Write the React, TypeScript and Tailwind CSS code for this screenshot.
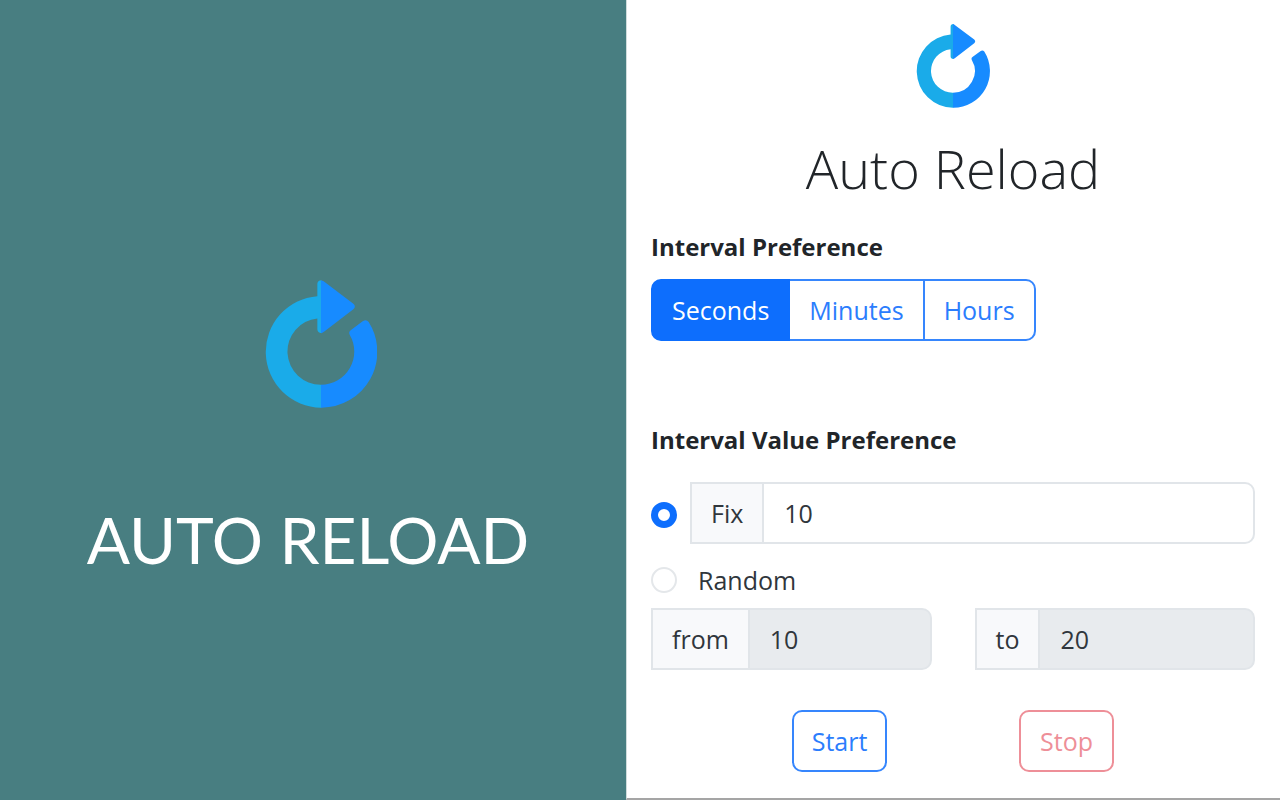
import { useState } from "react";

function ReloadLogo({ className }: { className: string }) {
  return (
    <svg viewBox="44 28 336 384" className={className} aria-hidden="true">
      <path
        fill="#1aabe9"
        d="M213 28.500C206 28.500 201 33 201 40V76.500A167.500 167.500 0 0 0 212 411H213V342H212A99.500 99.500 0 0 1 201 143.500V176C201 183 206 187.500 213 187.500Z"
      />
      <path
        fill="#178bff"
        d="M212 28.500Q216 29 220 32L309 99Q318 107 309 116L220 184Q216 187.500 212 187.500Z"
      />
      <path
        fill="#178bff"
        d="M212 342A99.500 99.500 0 0 0 298 192Q294 184 301 179L337 152Q348 145 355 154A167.500 167.500 0 0 1 212 411Z"
      />
    </svg>
  );
}

const units = ["Seconds", "Minutes", "Hours"];

const radioClass =
  "size-[26px] shrink-0 appearance-none rounded-full border-2 border-[#e4e7ea] bg-white checked:border-[7px] checked:border-[#0d6efd]";
const addonClass =
  "flex items-center border-2 border-r-0 border-[#e1e5e9] bg-[#f8f9fb] px-[19px]";
const fieldClass =
  "w-0 min-w-0 flex-1 rounded-r-[10px] border-2 border-[#e1e5e9] bg-white px-5 disabled:bg-[#e8ebee]";

export default function App() {
  const [unit, setUnit] = useState("Seconds");
  const [mode, setMode] = useState("fix");

  return (
    <div className="grid min-h-screen grid-cols-[626fr_654fr] bg-white">
      <section className="flex flex-col items-center justify-center bg-[#487e81] pt-[54px]">
        <ReloadLogo className="ml-4 h-32 w-28" />
        <p className="mt-[98px] mr-2.5 font-['Lato','Liberation_Sans',sans-serif] text-[64px] leading-[68px] whitespace-nowrap text-white">
          AUTO RELOAD
        </p>
      </section>

      <main className="flex flex-col border-b-2 border-l border-b-[#a5a5a5] border-l-[#d0dcdc] pt-6 pr-[25px] pb-6 pl-6 font-['Open_Sans','Noto_Sans',sans-serif] text-[25px] leading-[38px] text-[#30363c]">
        <ReloadLogo className="h-[84px] w-[74px] self-center" />
        <h1 className="mt-6 text-center text-[54px] leading-[72px] font-light text-[#212529]">
          Auto Reload
        </h1>

        <h2 className="mt-6 text-[24px] font-bold text-[#212529]">Interval Preference</h2>
        <div className="mt-[13px] flex self-start" role="group" aria-label="Interval Preference">
          {units.map((name) => (
            <button
              key={name}
              type="button"
              aria-pressed={unit === name}
              onClick={() => setUnit(name)}
              className={
                "-ml-0.5 h-[62px] border-2 px-[19px] first:ml-0 first:rounded-l-[10px] last:rounded-r-[10px] " +
                (unit === name
                  ? "relative border-[#0d6efd] bg-[#0d6efd] text-white"
                  : "border-[#3686fd] bg-white text-[#2b7dfd]")
              }
            >
              {name}
            </button>
          ))}
        </div>

        <h2 className="mt-20 text-[24px] font-bold text-[#212529]">Interval Value Preference</h2>
        <div className="mt-[23px] flex items-center gap-[13px]">
          <input
            type="radio"
            name="mode"
            aria-label="Fix"
            checked={mode === "fix"}
            onChange={() => setMode("fix")}
            className={radioClass + " mt-1"}
          />
          <div className="flex h-[62px] flex-1">
            <label htmlFor="fix" className={addonClass}>
              Fix
            </label>
            <input id="fix" defaultValue="10" disabled={mode !== "fix"} className={fieldClass} />
          </div>
        </div>
        <div className="mt-[17px] flex items-center gap-[21px]">
          <input
            id="random"
            type="radio"
            name="mode"
            checked={mode === "random"}
            onChange={() => setMode("random")}
            className={radioClass}
          />
          <label htmlFor="random">Random</label>
        </div>
        <div className="mt-[9px] grid grid-cols-2 gap-[43px]">
          <div className="flex h-[62px]">
            <label htmlFor="from" className={addonClass}>
              from
            </label>
            <input id="from" defaultValue="10" disabled={mode !== "random"} className={fieldClass} />
          </div>
          <div className="flex h-[62px]">
            <label htmlFor="to" className={addonClass}>
              to
            </label>
            <input id="to" defaultValue="20" disabled={mode !== "random"} className={fieldClass} />
          </div>
        </div>

        <div className="mt-10 flex justify-center gap-[132px]">
          <button
            type="button"
            className="h-[62px] w-[95px] rounded-[10px] border-2 border-[#3686fd] text-[#2b7dfd]"
          >
            Start
          </button>
          <button
            type="button"
            disabled
            className="h-[62px] w-[95px] rounded-[10px] border-2 border-[#ee8f98] text-[#ee8f98]"
          >
            Stop
          </button>
        </div>
      </main>
    </div>
  );
}
